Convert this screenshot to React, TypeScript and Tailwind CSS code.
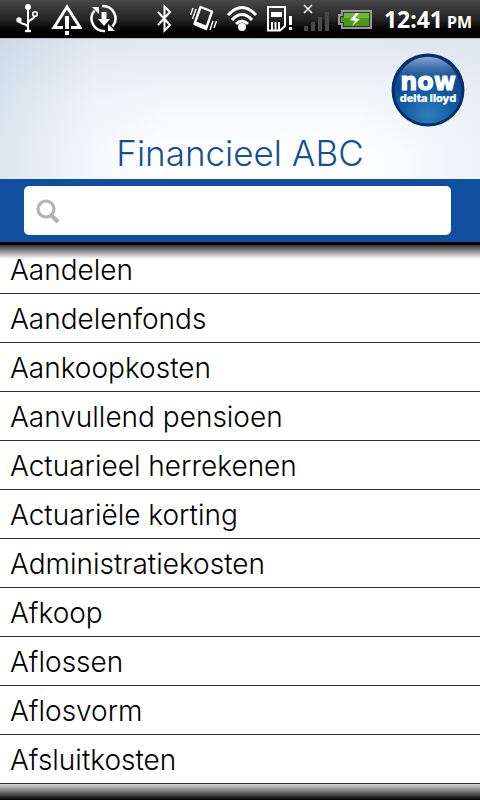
import type { ReactNode } from "react";

const terms = [
  "Aandelen",
  "Aandelenfonds",
  "Aankoopkosten",
  "Aanvullend pensioen",
  "Actuarieel herrekenen",
  "Actuariële korting",
  "Administratiekosten",
  "Afkoop",
  "Aflossen",
  "Aflosvorm",
  "Afsluitkosten",
];

const StatusIcon = ({ width, children }: { width: number; children: ReactNode }) => (
  <svg width={width} height={38} viewBox={`0 0 ${width} 38`} fill="none" stroke="#fff" className="shrink-0" aria-hidden="true">
    {children}
  </svg>
);

const NotificationIcons = () => (
  <div className="flex gap-1.5">
    {/* usb */}
    <StatusIcon width={28}>
      <path d="M12 6V31M12 28C12 22 3.5 26 3 20M12 23C13 18 19 21 19 14" strokeWidth={2} />
      <circle cx={12} cy={7} r={3} fill="#fff" stroke="none" />
      <circle cx={3} cy={20} r={2.7} fill="#fff" stroke="none" />
      <circle cx={19} cy={14} r={2.3} strokeWidth={1.6} fill="#333" />
      <path d="M9 31H15" strokeWidth={2.4} />
    </StatusIcon>
    {/* warning */}
    <StatusIcon width={32}>
      <path d="M13 27.5H4L17 7L30 27.5H21" strokeWidth={3} />
      <path d="M17 16V29M17 31V35" strokeWidth={4} />
    </StatusIcon>
    {/* sync */}
    <StatusIcon width={30}>
      <path d="M6.5 10.5A12.5 12.5 0 0 0 17 31M14 6A12.5 12.5 0 0 1 24.5 26.5" strokeWidth={2.6} />
      <path d="M4 7H11V14ZM20 24V31H27Z" fill="#fff" stroke="none" />
      <path d="M13.5 12H18.5V19H22L16 26L10 19H13.5Z" fill="#fff" stroke="none" />
    </StatusIcon>
  </div>
);

const SystemIcons = () => (
  <div className="flex gap-2">
    {/* bluetooth */}
    <StatusIcon width={28}>
      <path d="M4 12L16 25L10.5 30.5V6.5L16 12L4 25" strokeWidth={2} />
    </StatusIcon>
    {/* vibrate */}
    <StatusIcon width={28}>
      <path d="M10.5 7L22 11.5L16 29L4.5 24Z" strokeWidth={2.4} strokeLinejoin="round" />
      <path d="M5 21L17.5 26L16 29.5L4 25Z" fill="#fff" stroke="none" />
      <path d="M3 8L0.5 15M6 9L2.5 19M26.5 21L24 28M23 21L20 30" strokeWidth={1.4} />
    </StatusIcon>
    {/* wifi */}
    <StatusIcon width={32}>
      <path d="M2 15Q16 0 30 15M6 20Q16 9 26 20M10 24Q16 18 22 24" strokeWidth={3} />
      <circle cx={16} cy={27} r={4} fill="#fff" stroke="none" />
    </StatusIcon>
    {/* sim card */}
    <StatusIcon width={28}>
      <path d="M2 7H19V26L14 30.5H2Z" strokeWidth={2} />
      <path d="M5 12H16V17H5Z" fill="#fff" stroke="none" />
      <path d="M6 22V30M9.5 22V30M13 22V30" strokeWidth={2} />
      <path d="M24.5 16V25M24.5 27V30" strokeWidth={3} />
    </StatusIcon>
    {/* signal */}
    <StatusIcon width={28}>
      <path d="M2 5L10 13M10 5L2 13" strokeWidth={1.5} />
      <path d="M4 31V26M11 31V22M18 31V17M25 31V12" stroke="#484848" strokeWidth={4} />
    </StatusIcon>
    {/* battery */}
    <StatusIcon width={34}>
      <path d="M4 11H33V28H4V24H1V15H4Z" fill="#333" stroke="#999" strokeWidth={2} />
      <path d="M6 13H31V26H6V22H3V17H6Z" fill="#4a9a14" stroke="none" />
      <path d="M6 13H31V18H6Z" fill="#6fb83a" stroke="none" />
      <path d="M18 13L12 20L17 21L14 26L22 19L17 18L21 13Z" fill="#fff" stroke="none" />
    </StatusIcon>
  </div>
);

const StatusBar = () => (
  <div className="flex h-[38px] shrink-0 justify-between bg-linear-to-b from-[#484848] via-[#252525] to-black pl-4 pr-2">
    <NotificationIcons />
    <div className="flex gap-3">
      <SystemIcons />
      <div className="flex items-baseline gap-1 font-['Noto_Sans'] font-bold text-white">
        <span className="text-[23px] leading-[38px]">12:41</span>
        <span className="text-base">PM</span>
      </div>
    </div>
  </div>
);

const Logo = () => (
  <svg width={74} height={74} viewBox="0 0 74 74" role="img" aria-label="now delta lloyd">
    <defs>
      <radialGradient id="ball" cx="50%" cy="85%" r="80%">
        <stop offset="0" stopColor="#2f7fba" />
        <stop offset="0.45" stopColor="#125ba3" />
        <stop offset="1" stopColor="#073b83" />
      </radialGradient>
      <linearGradient id="gloss" x1="0" y1="0" x2="0" y2="1">
        <stop offset="0" stopColor="#9dbbe0" stopOpacity="0.85" />
        <stop offset="1" stopColor="#3c75b5" stopOpacity="0.1" />
      </linearGradient>
    </defs>
    <circle cx={37} cy={37} r={35} fill="url(#ball)" stroke="#062f6d" strokeWidth={3} />
    <path d="M6 29C11 12 23 4 37 4S63 12 68 29C49 24 25 24 6 29Z" fill="url(#gloss)" />
    <text fill="#fff" stroke="#fff" textAnchor="middle">
      <tspan x={37} y={37} fontSize={24} fontWeight={700} strokeWidth={1} fontFamily="DejaVu Sans, sans-serif">now</tspan>
      <tspan x={37} y={49} fontSize={11} fontWeight={800} strokeWidth={0.2} fontFamily="Inter, sans-serif">delta lloyd</tspan>
    </text>
  </svg>
);

const Header = () => (
  <header className="relative flex h-[141px] shrink-0 items-end justify-center border-t border-[#b9bdc1] bg-[linear-gradient(to_right,#b8cee180,#dbe6f040_20%,transparent_35%,transparent_75%,#dbe6f080),linear-gradient(to_bottom,#e0e7ed,#f5f8fa_45%,#ffffff_80%)] pb-1">
    <h1 className="text-[35px] font-light leading-[44px] text-[#174f98]">Financieel ABC</h1>
    <div className="absolute right-[15px] top-3.5">
      <Logo />
    </div>
  </header>
);

const SearchBar = () => (
  <div className="shrink-0 bg-[#104f9f] pt-[7px] pr-[29px] pb-[7px] pl-6">
    <label className="flex h-[49px] items-center rounded-[5px] bg-white pl-3">
      <svg width={24} height={26} viewBox="0 0 24 26" fill="none" stroke="#b3b3b7" aria-hidden="true">
        <circle cx={10} cy={11} r={8} strokeWidth={3.2} />
        <path d="M15 17L22 24" strokeWidth={4} />
      </svg>
      <input type="search" aria-label="Zoeken" className="min-w-0 grow bg-transparent px-2 text-2xl font-light outline-none" />
    </label>
  </div>
);

const TermList = () => (
  <main className="relative min-h-0 grow">
    <ul className="h-full overflow-y-auto [scrollbar-width:none]">
      {terms.map((term) => (
        <li key={term} className="h-[49px] border-b border-[#303030] px-2.5 text-[28px] font-light leading-[50px] text-black">
          {term}
        </li>
      ))}
    </ul>
    <div className="pointer-events-none absolute inset-x-0 top-0 h-3.5 bg-linear-to-b from-[#333333] to-transparent" />
    <div className="pointer-events-none absolute inset-x-0 bottom-0 h-4 bg-linear-to-b from-black/15 to-black" />
  </main>
);

const App = () => {
  return (
    <div className="flex h-screen flex-col bg-white font-['Inter',sans-serif]">
      <StatusBar />
      <Header />
      <SearchBar />
      <div className="h-[3px] shrink-0 bg-black" />
      <TermList />
    </div>
  );
};

export default App;
